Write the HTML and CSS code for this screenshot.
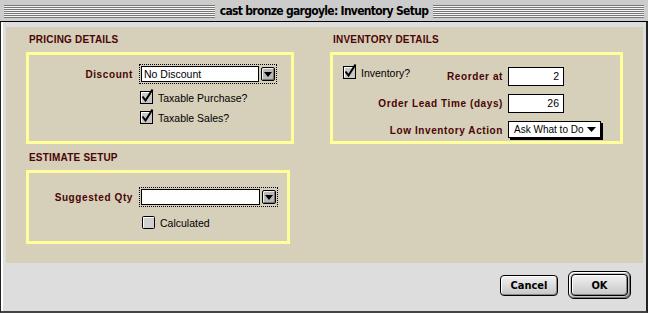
FILE: index.html
```html
<!DOCTYPE html>
<html lang="en">
<head>
    <meta charset="UTF-8">
    <title>cast bronze gargoyle: Inventory Setup</title>
    <link rel="stylesheet" href="styles.css">
</head>
<body>
    <div class="window">
        <div class="titlebar">
            <span class="stripes"></span>
            <span class="title">cast bronze gargoyle: Inventory Setup</span>
            <span class="stripes"></span>
        </div>
        <div class="content">
            <div class="panel">
                <div class="col">
                    <div class="group">
                        <h2>PRICING DETAILS</h2>
                        <div class="box pricing">
                            <div class="row">
                                <label class="label">Discount</label>
                                <div class="combo">
                                    <span class="combo-field">No Discount</span>
                                    <span class="arrow-btn">
                                        <svg width="8" height="5" viewBox="0 0 8 5"><path d="M0 0h8L4 5z" fill="#000"/></svg>
                                    </span>
                                </div>
                            </div>
                            <div class="checks">
                                <div class="check-row">
                                    <svg class="cb" width="16" height="15" viewBox="0 0 16 15"><rect x="0.5" y="2.5" width="12" height="12" fill="#c8c8c8" stroke="#000"/><path d="M1.5 13V3.5H12" stroke="#fff" fill="none"/><path d="M2.5 7.5l3 4l7-11" stroke="#000" stroke-width="2" fill="none"/></svg>
                                    <span>Taxable Purchase?</span>
                                </div>
                                <div class="check-row">
                                    <svg class="cb" width="16" height="15" viewBox="0 0 16 15"><rect x="0.5" y="2.5" width="12" height="12" fill="#c8c8c8" stroke="#000"/><path d="M1.5 13V3.5H12" stroke="#fff" fill="none"/><path d="M2.5 7.5l3 4l7-11" stroke="#000" stroke-width="2" fill="none"/></svg>
                                    <span>Taxable Sales?</span>
                                </div>
                            </div>
                        </div>
                    </div>
                    <div class="group">
                        <h2>ESTIMATE SETUP</h2>
                        <div class="box estimate">
                            <div class="row">
                                <label class="label">Suggested Qty</label>
                                <div class="combo">
                                    <span class="combo-field"></span>
                                    <span class="arrow-btn">
                                        <svg width="8" height="5" viewBox="0 0 8 5"><path d="M0 0h8L4 5z" fill="#000"/></svg>
                                    </span>
                                </div>
                            </div>
                            <div class="checks">
                                <div class="check-row">
                                    <svg class="cb" width="16" height="15" viewBox="0 0 16 15"><rect x="0.5" y="2.5" width="12" height="12" rx="1" fill="#d0d0d0" stroke="#000"/><path d="M1.5 13V3.5H12" stroke="#fff" fill="none"/></svg>
                                    <span>Calculated</span>
                                </div>
                            </div>
                        </div>
                    </div>
                </div>
                <div class="col">
                    <div class="group">
                        <h2>INVENTORY DETAILS</h2>
                        <div class="box inventory">
                            <div class="check-row inv-check">
                                <svg class="cb" width="16" height="15" viewBox="0 0 16 15"><rect x="0.5" y="2.5" width="12" height="12" fill="#c8c8c8" stroke="#000"/><path d="M1.5 13V3.5H12" stroke="#fff" fill="none"/><path d="M2.5 7.5l3 4l7-11" stroke="#000" stroke-width="2" fill="none"/></svg>
                                <span>Inventory?</span>
                            </div>
                            <div class="fields">
                                <label class="label">Reorder at</label>
                                <span class="num">2</span>
                                <label class="label">Order Lead Time (days)</label>
                                <span class="num">26</span>
                                <label class="label">Low Inventory Action</label>
                                <span class="popup">
                                    <span>Ask What to Do</span>
                                    <svg width="9" height="5" viewBox="0 0 9 5"><path d="M0 0h9L4.5 5z" fill="#000"/></svg>
                                </span>
                            </div>
                        </div>
                    </div>
                </div>
            </div>
            <div class="buttons">
                <button class="btn">Cancel</button>
                <span class="default-ring"><button class="btn ok">OK</button></span>
            </div>
        </div>
    </div>
</body>
</html>
```

FILE: styles.css
```css
body {
    margin: 0;
    padding: 0;
    background: #dddddd;
    font-family: "Liberation Sans", Arial, sans-serif;
    font-size: 10px;
    color: #000;
}

.window {
    width: 648px;
    height: 313px;
    display: flex;
    flex-direction: column;
}

/* title bar with the pinstripes */
.titlebar {
    height: 22px;
    background: #cccccc;
    border-bottom: 1px solid #000;
    display: flex;
    align-items: center;
    padding: 0 4px;
    gap: 3px;
    box-sizing: border-box;
}

.stripes {
    flex: 1;
    height: 13px;
    background: repeating-linear-gradient(to bottom, #777 0 1px, #f4f4f4 1px 2px);
    margin-top: 1px;
}

.title {
    font-family: "DejaVu Sans Condensed", "DejaVu Sans", sans-serif;
    font-stretch: condensed;
    font-weight: bold;
    font-size: 12px;
    letter-spacing: -0.7px;
    color: #000;
    padding: 0 2px;
}

.content {
    flex: 1;
    background: #dddddd;
    border-left: 1px solid #222;
    border-right: 2px solid #222;
    border-bottom: 2px solid #444;
    box-shadow: inset 2px 0 #fff;
    padding: 5px 3px 0 5px;
    display: flex;
    flex-direction: column;
}

.panel {
    height: 236px;
    background: #d6cfb9;
    display: flex;
    padding: 8px 0 0 20px;
    box-sizing: border-box;
    gap: 36px;
}

.group h2 {
    margin: 0 0 7px 3px;
    font-size: 10px;
    line-height: 10px;
    letter-spacing: 0.2px;
    font-weight: bold;
    color: #4a0505;
}

.group + .group {
    margin-top: 9px;
}

.box {
    border: 3px solid #ffff99;
    box-sizing: border-box;
}

.pricing {
    width: 268px;
    height: 92px;
    padding-top: 9px;
}

.estimate {
    width: 264px;
    height: 74px;
    padding-top: 14px;
}

.inventory {
    width: 293px;
    height: 92px;
    display: flex;
    padding: 10px 0 0 10px;
}

.label {
    font-weight: bold;
    font-size: 10px;
    letter-spacing: 0.6px;
    color: #4a0505;
}

.row {
    display: flex;
    align-items: center;
}

.row .label {
    width: 104px;
    text-align: right;
    padding-right: 6px;
}

.combo {
    display: flex;
    align-items: center;
    gap: 2px;
    padding: 1px;
    border: 1px dotted #000;
    height: 16px;
}

.combo-field {
    width: 114px;
    height: 14px;
    border: 1px solid #000;
    background: #fff;
    padding-left: 2px;
    font-size: 10.5px;
    line-height: 14px;
}

.estimate .combo-field {
    width: 115px;
}

.arrow-btn {
    width: 12px;
    height: 12px;
    border: 1px solid #000;
    border-radius: 2px;
    background: #b8b8b8;
    box-shadow: inset 1px 1px #eee, inset -1px -1px #777;
    display: flex;
    align-items: center;
    justify-content: center;
}

.checks {
    display: flex;
    flex-direction: column;
    gap: 5px;
    margin: 6px 0 0 111px;
}

.estimate .checks {
    margin: 8px 0 0 113px;
}

.check-row {
    display: flex;
    align-items: center;
    gap: 2px;
    font-size: 10.5px;
    height: 15px;
}

.cb {
    display: block;
    margin-top: -2px;
}

.inv-check {
    align-self: flex-start;
}

.fields {
    display: grid;
    grid-template-columns: 128px auto;
    column-gap: 5px;
    row-gap: 6px;
    align-items: center;
    margin-left: -35px;
    margin-top: 1px;
}

.fields .label {
    text-align: right;
    white-space: nowrap;
}

.num {
    width: 50px;
    height: 17px;
    border: 1px solid #000;
    background: #fff;
    text-align: right;
    padding-right: 4px;
    font-size: 10.5px;
    line-height: 17px;
}

.popup {
    width: 82px;
    height: 15px;
    border: 1px solid #000;
    background: #fff;
    box-shadow: 2px 2px #000;
    font-size: 10px;
    line-height: 15px;
    padding: 0 4px 0 5px;
    white-space: nowrap;
    display: flex;
    align-items: center;
    justify-content: space-between;
    margin-bottom: 2px;
}

.buttons {
    display: flex;
    justify-content: flex-end;
    align-items: center;
    gap: 10px;
    padding: 8px 12px 0 0;
}

.btn {
    font-family: "DejaVu Sans Condensed", "DejaVu Sans", sans-serif;
    font-weight: bold;
    font-size: 11px;
    width: 58px;
    height: 21px;
    border: 1px solid #000;
    border-radius: 4px;
    background: linear-gradient(#f2f2f2, #c6c6c6);
    box-shadow: inset 1px 1px #fff, inset -1px -1px #888;
    padding: 0;
    color: #000;
}

.default-ring {
    display: flex;
    padding: 2px;
    border: 1px solid #000;
    border-radius: 6px;
    background: #c4c4c4;
    box-shadow: inset 1px 1px #fff, inset -1px -1px #777;
}

.ok {
    width: 57px;
    height: 22px;
}
```
